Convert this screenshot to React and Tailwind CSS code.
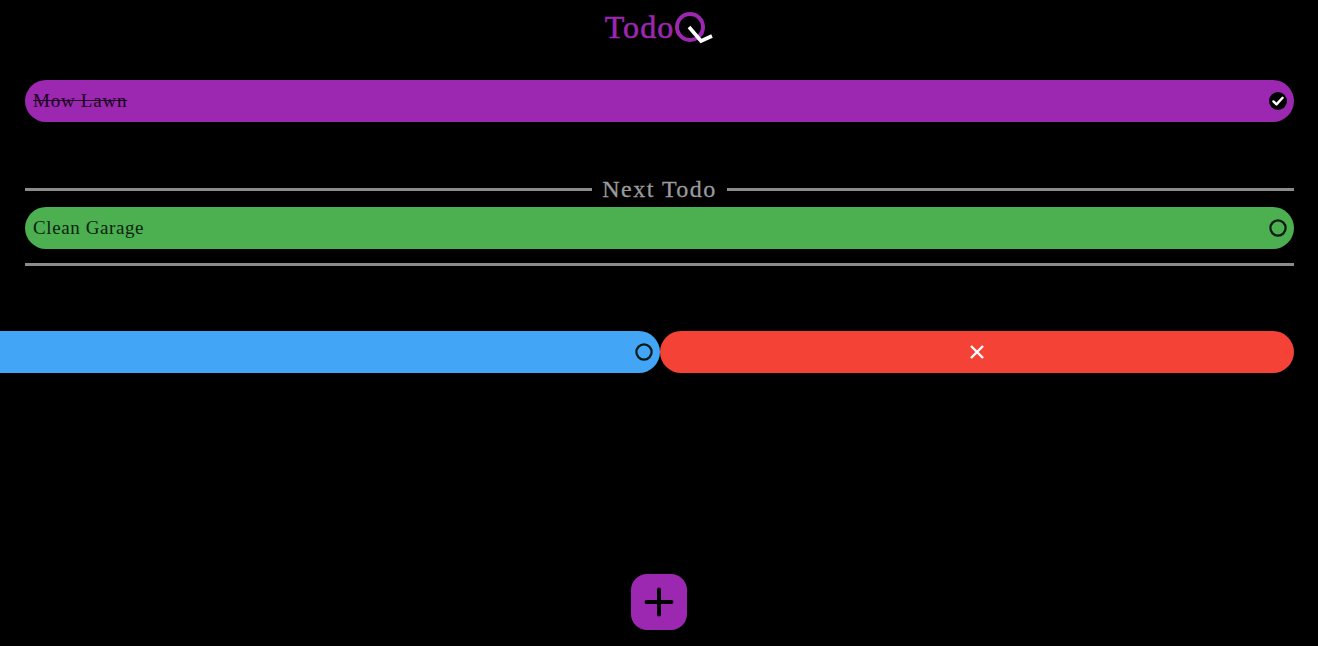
import React from "react";

const serif = "[font-family:'Liberation_Serif',serif]";

function Ring() {
  return (
    <svg width="18" height="18" viewBox="0 0 18 18" className="shrink-0">
      <circle cx="9" cy="9" r="7.6" fill="none" stroke="#0b1a12" strokeWidth="2.2" />
    </svg>
  );
}

function Checked() {
  return (
    <svg width="18" height="18" viewBox="0 0 18 18" className="shrink-0">
      <circle cx="9" cy="9" r="9" fill="#000" />
      <path d="M4.4 9.4 L7.5 12.4 L13.6 5.8" fill="none" stroke="#fff" strokeWidth="2.4" strokeLinecap="round" strokeLinejoin="round" />
    </svg>
  );
}

function Row({ bg, children, icon }) {
  return (
    <div className={`h-[42px] rounded-[21px] ${bg} flex items-center justify-between pl-2 pr-[7px]`}>
      {children}
      {icon}
    </div>
  );
}

export default function App() {
  return (
    <div className={`h-[646px] overflow-hidden bg-black flex flex-col ${serif}`}>
      <header className="h-[80px] shrink-0 flex justify-center pt-[8px] pl-[2px]">
        <div className="flex items-start h-[40px]">
          <span className="text-[32px] leading-[38px] tracking-[1.1px] text-[#9c27b0] [-webkit-text-stroke:0.6px_#9c27b0]">Todo</span>
          <svg width="42" height="40" viewBox="0 0 42 40" className="mt-[2px] -ml-[1px] shrink-0">
            <circle cx="17" cy="17" r="13" fill="none" stroke="#9c27b0" strokeWidth="4" />
            <path d="M16 17 L28 31 L39 26" fill="none" stroke="#fff" strokeWidth="3.6" strokeLinejoin="miter" />
          </svg>
        </div>
      </header>

      <main className="pl-[25px] pr-[24px]">
        <Row bg="bg-[#9c27b0]" icon={<Checked />}>
          <span className="text-[19px] tracking-[0.75px] text-[#1a0420] line-through">Mow Lawn</span>
        </Row>

        <div className="mt-[55px] mb-[6px] h-[24px] flex items-center gap-[10px]">
          <div className="flex-1 h-[3px] bg-[#8c8c8c]" />
          <span className="text-[24px] leading-[24px] tracking-[1.5px] text-[#9a9a9a] [-webkit-text-stroke:0.3px_#9a9a9a]">Next Todo</span>
          <div className="flex-1 h-[3px] bg-[#8c8c8c]" />
        </div>
        <div className="mt-[1px]">
          <Row bg="bg-[#4caf50]" icon={<Ring />}>
            <span className="text-[19px] tracking-[0.6px] text-[#0c2410]">Clean Garage</span>
          </Row>
        </div>
        <div className="mt-[14px] h-[3px] bg-[#8c8c8c]" />

        <div className="mt-[65px] flex">
          <div className="-ml-[25px] w-[660px] h-[42px] rounded-r-[21px] bg-[#42a5f5] flex items-center justify-end pr-[7px]">
            <Ring />
          </div>
          <div className="flex-1 h-[42px] rounded-[21px] bg-[#f44336] flex items-center justify-center">
            <svg width="16" height="16" viewBox="0 0 16 16">
              <path d="M2 2 L14 14 M14 2 L2 14" stroke="#fff" strokeWidth="2.4" fill="none" />
            </svg>
          </div>
        </div>
      </main>

      <footer className="mt-auto pb-[16px] flex justify-center">
        <button className="w-[56px] h-[56px] rounded-[16px] bg-[#9c27b0] flex items-center justify-center">
          <svg width="30" height="30" viewBox="0 0 30 30">
            <path d="M15 2.5 V27.5 M2.5 15 H27.5" stroke="#000" strokeWidth="4" strokeLinecap="round" fill="none" />
          </svg>
        </button>
      </footer>
    </div>
  );
}
